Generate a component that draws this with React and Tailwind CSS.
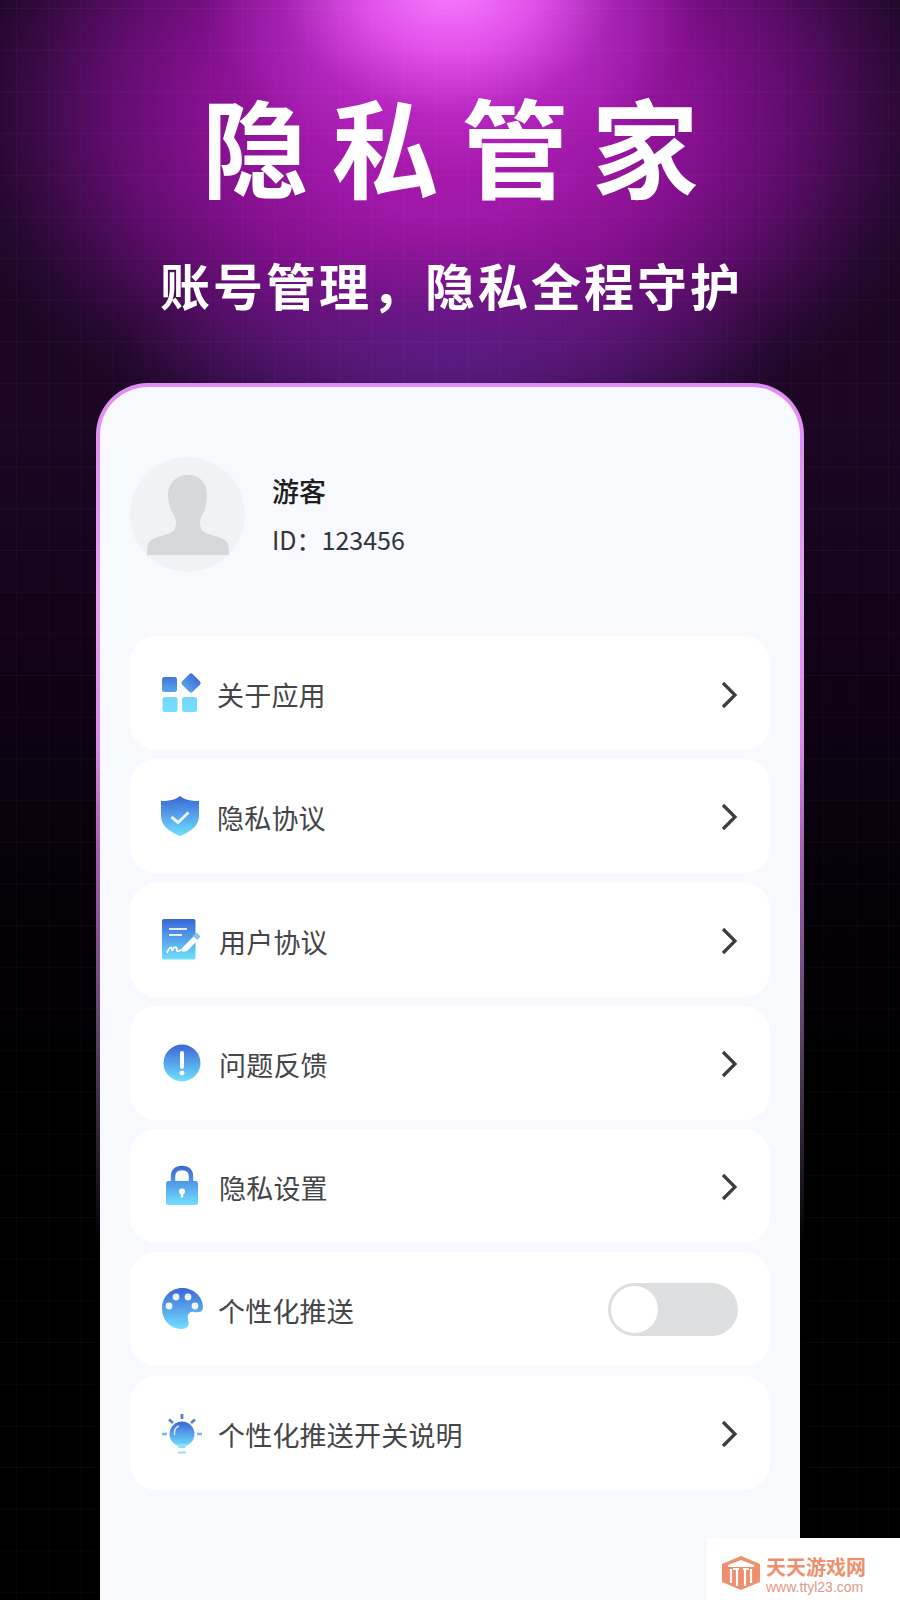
import React from "react";

const Defs = ({ id }) => (
  <defs>
    <linearGradient id={id} x1="0" y1="0" x2="0" y2="1">
      <stop offset="0" stopColor="#3b66d6" />
      <stop offset="1" stopColor="#70e0ff" />
    </linearGradient>
  </defs>
);

const Svg = ({ children, id, w = 44 }) => (
  <svg width={w} height="44" viewBox={`0 0 ${w} 44`} className="shrink-0">
    <Defs id={id} />
    {children}
  </svg>
);

const icons = {
  apps: (
    <Svg id="g1">
      <defs>
        <linearGradient id="g1b" gradientUnits="userSpaceOnUse" x1="0" y1="1" x2="0" y2="42">
          <stop offset="0" stopColor="#3b66d6" />
          <stop offset="0.5" stopColor="#5aa6ec" />
          <stop offset="0.6" stopColor="#7bd4f8" />
          <stop offset="1" stopColor="#70e0ff" />
        </linearGradient>
      </defs>
      <rect x="2" y="6" width="15" height="15" rx="2.5" fill="url(#g1b)" />
      <rect x="23.5" y="4.5" width="15" height="15" rx="2.5" fill="url(#g1b)" transform="rotate(45 31 12)" />
      <rect x="2.5" y="26" width="15" height="15" rx="2.5" fill="url(#g1b)" />
      <rect x="22" y="26" width="15" height="15" rx="2.5" fill="url(#g1b)" />
    </Svg>
  ),
  shield: (
    <Svg id="g2">
      <path d="M20 2C23 5 30 7 39 7V22C39 32 30 38 20 42C10 38 1 32 1 22V7C10 7 17 5 20 2Z" fill="url(#g2)" />
      <path d="M11.5 23L18 28.5L28.5 18.5" fill="none" stroke="#fff" strokeOpacity="0.85" strokeWidth="3" />
    </Svg>
  ),
  doc: (
    <Svg id="g3">
      <rect x="2" y="1" width="33.5" height="40.5" rx="2" fill="url(#g3)" />
      <path d="M9 11H27M9 17H22" stroke="#fff" strokeOpacity="0.85" strokeWidth="2" />
      <path d="M7 35C10 28 12 28 12 33C14 28 17 28 17 33C19 34 21 32 24 30" fill="none" stroke="#fff" strokeWidth="1.8" />
      <path d="M23 29L34 18L38 22L27 33L22 34Z" fill="#fff" />
      <path d="M33 18L36.5 14.5L40.5 18.5L37.5 22Z" fill="#7ec8f4" />
    </Svg>
  ),
  alert: (
    <Svg id="g4">
      <circle cx="22" cy="22" r="18.5" fill="url(#g4)" />
      <path d="M22 12V26" stroke="#fff" strokeWidth="4" strokeLinecap="round" />
      <circle cx="22" cy="32" r="2.4" fill="#fff" />
    </Svg>
  ),
  lock: (
    <Svg id="g5">
      <defs>
        <linearGradient id="g5b" gradientUnits="userSpaceOnUse" x1="0" y1="2" x2="0" y2="41">
          <stop offset="0" stopColor="#3b66d6" />
          <stop offset="1" stopColor="#70e0ff" />
        </linearGradient>
      </defs>
      <path d="M13 20V12.5C13 7 16.5 4 22 4C27.5 4 31 7 31 12.5V20" fill="none" stroke="url(#g5b)" strokeWidth="4.5" />
      <rect x="6" y="17" width="32" height="24" rx="2.5" fill="url(#g5b)" />
      <circle cx="22" cy="27.5" r="3" fill="#fff" />
      <path d="M22 28V33.5" stroke="#fff" strokeWidth="2.4" />
    </Svg>
  ),
  palette: (
    <Svg id="g6">
      <path d="M22 1C33 1 43 9 43 20C43 25 39 26 34 25C29 24 27 28 28 33C30 38 27 42 22 42C10 42 2 33 2 21C2 10 11 1 22 1Z" fill="url(#g6)" />
      <circle cx="16" cy="10" r="3.4" fill="#fff" fillOpacity="0.9" />
      <circle cx="28" cy="10" r="3.4" fill="#fff" fillOpacity="0.9" />
      <circle cx="9" cy="19" r="3.4" fill="#fff" fillOpacity="0.9" />
      <circle cx="35" cy="19" r="3.4" fill="#fff" fillOpacity="0.9" />
    </Svg>
  ),
  bulb: (
    <Svg id="g7">
      <circle cx="22" cy="23" r="12.5" fill="url(#g7)" />
      <path d="M17 33L19 37H25L27 33Z" fill="#8fdcfb" />
      <path d="M18 41.5H26" stroke="#8fdcfb" strokeWidth="2" />
      <path d="M22 3V8" stroke="#5b7fc4" strokeWidth="2.8" />
      <path d="M9 8.5L13 12" stroke="#5b7fc4" strokeWidth="2.6" />
      <path d="M35 8.5L31 12" stroke="#5b7fc4" strokeWidth="2.6" />
      <path d="M2 23H7" stroke="#7fb8e4" strokeWidth="2.6" />
      <path d="M37 23H42" stroke="#7fb8e4" strokeWidth="2.6" />
      <path d="M14.5 24C14 19 16 16 19 15" fill="none" stroke="#fff" strokeOpacity="0.8" strokeWidth="1.4" />
    </Svg>
  ),
};

const Chevron = () => (
  <svg width="18" height="30" viewBox="0 0 18 30" className="shrink-0">
    <path d="M3 3L15 15L3 27" fill="none" stroke="#3c3d40" strokeWidth="3.2" />
  </svg>
);

const Toggle = () => (
  <div className="w-[130px] h-[53px] rounded-full bg-[#dcdedf] p-[3px] flex items-center">
    <div className="w-[47px] h-[47px] rounded-full bg-white" />
  </div>
);

const rows = [
  { icon: icons.apps, label: "关于应用", ml: "ml-[13px]", chev: "pt-[4px]" },
  { icon: icons.shield, label: "隐私协议", ml: "ml-[13px]", chev: "pt-[2px]" },
  { icon: icons.doc, label: "用户协议", ml: "ml-[15px]", chev: "pt-[2px]" },
  { icon: icons.alert, label: "问题反馈", ml: "ml-[15px]", chev: "pt-[2px]" },
  { icon: icons.lock, label: "隐私设置", ml: "ml-[15px]", chev: "pt-[2px]" },
  { icon: icons.palette, label: "个性化推送", ml: "ml-[14px]", toggle: true, chev: "" },
  { icon: icons.bulb, label: "个性化推送开关说明", ml: "ml-[14px]", chev: "pt-[2px]" },
];

const Row = ({ icon, label, ml, toggle, chev }) => (
  <div className="h-[114px] rounded-[26px] bg-white flex items-center pl-[30px] pr-[32px]">
    {icon}
    <span className={`${ml} pt-[4px] text-[27px] tracking-[0.2px] leading-[40px] text-[#444548]`}>{label}</span>
    <div className={`ml-auto flex items-center ${chev}`}>{toggle ? <Toggle /> : <Chevron />}</div>
  </div>
);

export default function App() {
  return (
    <div className="relative w-[900px] h-[1600px] overflow-hidden flex flex-col bg-black font-['Noto_Sans_CJK_SC','Noto_Sans',sans-serif] bg-[linear-gradient(rgba(255,255,255,0.03)_1px,transparent_1px),linear-gradient(90deg,rgba(255,255,255,0.025)_1px,transparent_1px),radial-gradient(ellipse_250px_190px_at_50%_-15px,rgba(250,125,255,1)_0%,rgba(240,95,250,0.8)_35%,rgba(205,60,225,0.35)_68%,rgba(180,40,200,0)_100%),radial-gradient(ellipse_330px_120px_at_50%_360px,rgba(90,34,140,0.7)_0%,rgba(80,30,130,0)_100%),radial-gradient(ellipse_520px_370px_at_50%_110px,#ae1cb0_0%,#a018a8_28%,#84108e_48%,#5e0c6c_66%,#3a0a46_80%,#24082e_90%,rgba(28,6,36,0)_100%),linear-gradient(180deg,#0d0510_0%,#1c0624_14%,#1c0624_26%,#120318_40%,#060108_55%,#000000_68%)] bg-[size:32.3px_41.7px,32.3px_41.7px,100%_100%,100%_100%,100%_100%,100%_100%] bg-[position:0_8px,16px_0,0_0,0_0,0_0,0_0]">
      <div className="h-[383px] shrink-0 flex flex-col items-center">
        <h1 className="mt-[69px] h-[150px] flex items-center text-[107px] leading-[150px] font-bold text-white tracking-[23px] mr-[-23px] whitespace-nowrap">
          隐私管家
        </h1>
        <p className="mt-[35px] text-[50px] leading-[60px] font-bold text-white tracking-[3px] mr-[-3px] whitespace-nowrap">
          账号管理，隐私全程守护
        </p>
      </div>

      <div className="flex-1 mx-[96px] rounded-t-[52px] px-[4px] pt-[4px] bg-[linear-gradient(180deg,#e08cf2_0%,#e8a0f8_18%,#d88ae8_30%,#a860b4_38%,#6a4a78_51%,#3e3044_59%,#000000_71%)]">
        <div className="h-full rounded-t-[48px] bg-[#f8f9ff] px-[30px] pt-[69px]">
          <div className="flex items-center h-[116px]">
            <div className="w-[115px] h-[115px] rounded-full bg-[#f1f2f6] overflow-hidden flex items-start justify-center pt-[18px] shrink-0">
              <svg width="82" height="80" viewBox="0 0 82 80">
                <path
                  d="M41 0C53 0 60 8 60 20C60 30 57 38 54 42C52 48 53 54 57 57C62 60 72 61 78 65C81 68 82 72 82 80H0C0 72 1 68 4 65C10 61 20 60 25 57C29 54 30 48 28 42C25 38 21 30 21 20C21 8 29 0 41 0Z"
                  fill="#d6d8db"
                />
              </svg>
            </div>
            <div className="ml-[27px] flex flex-col">
              <span className="text-[27px] mt-[2px] leading-[38px] font-medium text-[#1e1e20]">游客</span>
              <span className="text-[25px] mt-[10px] leading-[38px] text-[#333438]">ID：123456</span>
            </div>
          </div>

          <div className="mt-[64px] flex flex-col gap-[9.3px]">
            {rows.map((r) => (
              <Row key={r.label} {...r} />
            ))}
          </div>
        </div>
      </div>

      <div className="absolute right-0 bottom-0 w-[193px] h-[62px] bg-white flex items-start pl-[15px] pt-[18px] gap-[6px]">
        <svg width="38" height="34" viewBox="0 0 38 34" className="shrink-0">
          <path d="M19 0L38 8V26L19 34L0 26V8Z" fill="#ee8f6e" />
          <path d="M6 9L19 4L32 9V11H6Z" fill="#fff" />
          <path d="M9 13V27M15 13V30M23 13V30M29 13V27M11 13H17M21 13H27" stroke="#fff" strokeWidth="2.2" fill="none" />
        </svg>
        <div className="flex flex-col mt-[-1px]">
          <span className="text-[20px] leading-[24px] font-bold text-[#ee8f6e] whitespace-nowrap">天天游戏网</span>
          <span className="text-[14px] leading-[16px] text-[#dd9a88] whitespace-nowrap font-['Liberation_Sans',sans-serif]">www.ttyl23.com</span>
        </div>
      </div>
    </div>
  );
}
